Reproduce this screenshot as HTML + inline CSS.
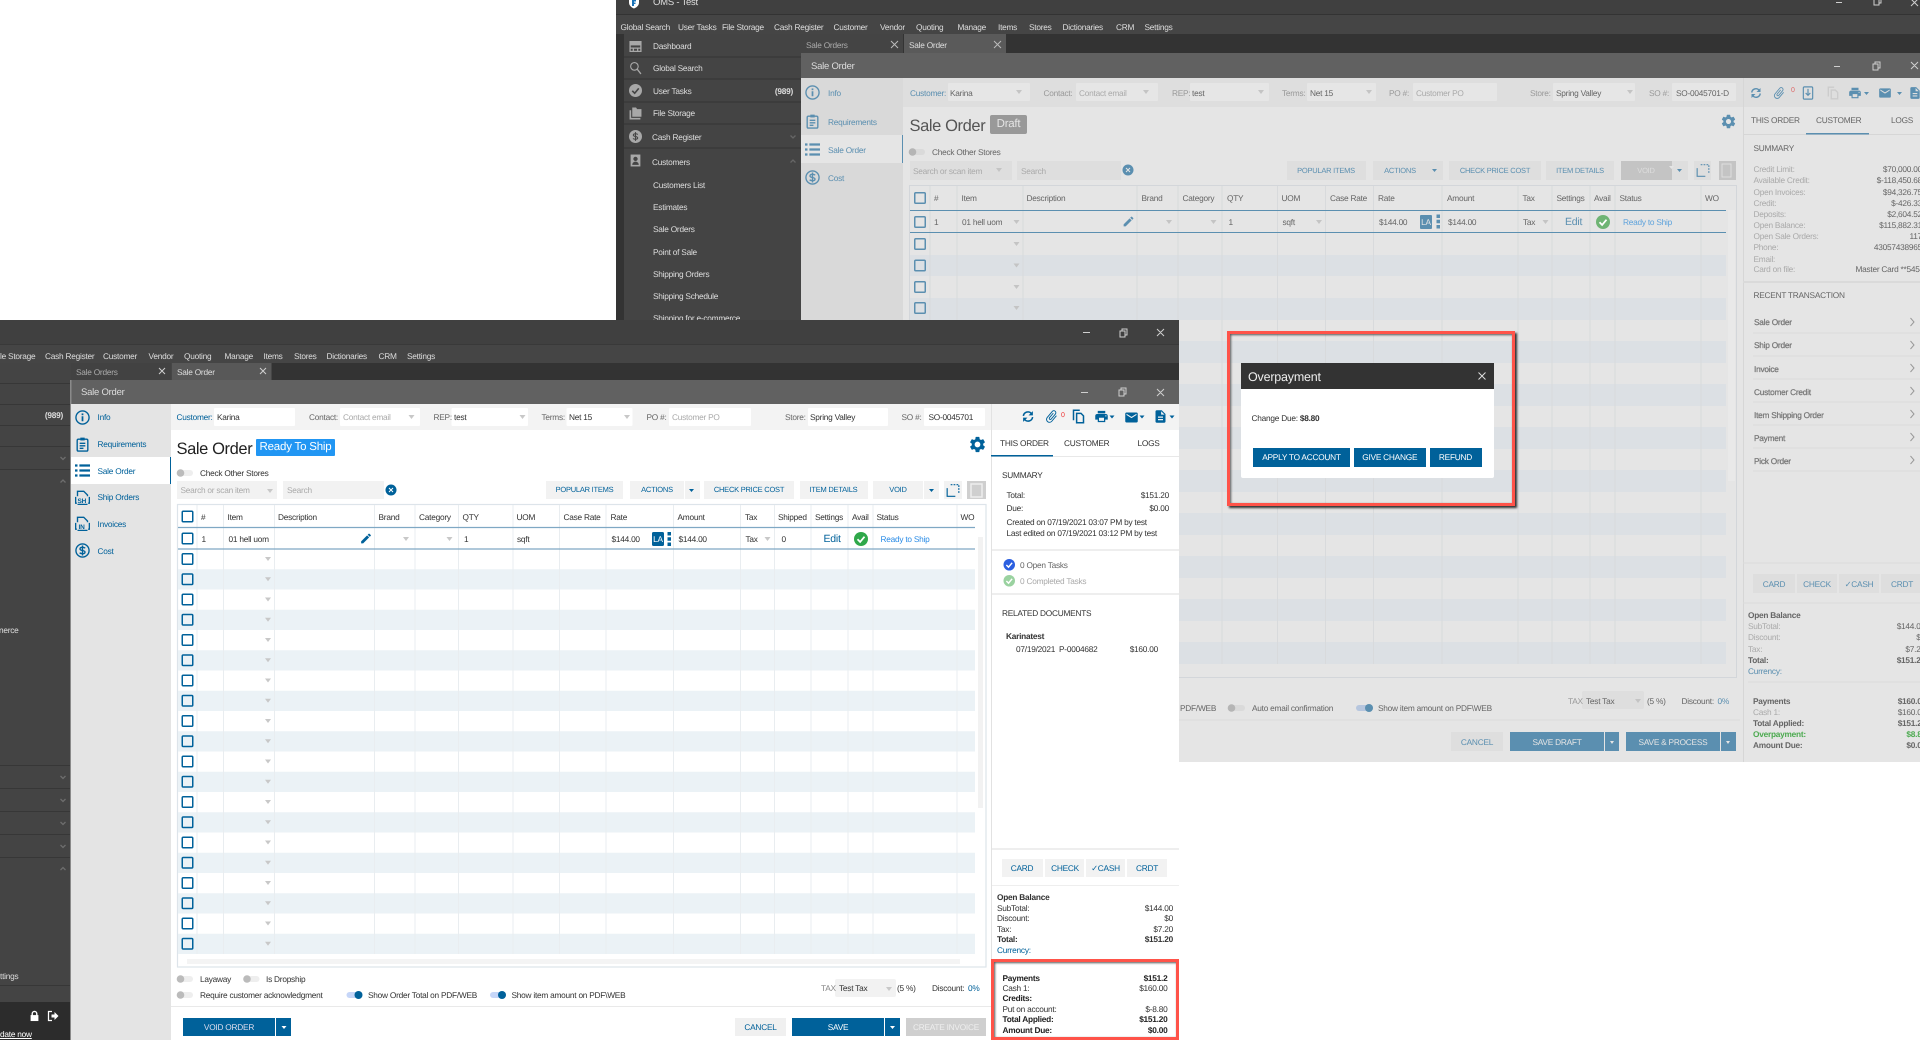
<!DOCTYPE html>
<html><head><meta charset="utf-8"><title>Sale Order</title>
<style>
html,body{margin:0;padding:0;background:#fff;width:1920px;height:1040px;overflow:hidden}
#w{position:absolute;left:0;top:0;width:1920px;height:1040px;overflow:hidden;filter:blur(.35px);font-family:"Liberation Sans",sans-serif;font-size:8.300px;letter-spacing:-.24px;text-rendering:geometricPrecision}
svg.p{position:absolute;left:0;top:0}
.t{position:absolute;line-height:0;white-space:nowrap}
.t:not(.box){margin-top:.2px}
.r{transform:translateX(-100%)}
.c{transform:translateX(-50%)}
.b{font-weight:bold}
.s{-webkit-text-stroke:.25px currentColor;color:#777}
.u{color:#666}.lo{color:#333}
.du{color:#ddd}.g{color:#aaa}
.bu{color:#5b8fb0}.bl{color:#00619a}
.box{position:absolute;box-sizing:border-box}
</style></head><body><div id="w">
<svg class="p" width="1920" height="1040" viewBox="0 0 1920 1040" xmlns="http://www.w3.org/2000/svg">
<defs>
<symbol id="gear" viewBox="0 0 24 24"><path fill="currentColor" d="M19.14 12.94c.04-.3.06-.61.06-.94 0-.32-.02-.64-.07-.94l2.03-1.58c.18-.14.23-.41.12-.61l-1.92-3.32c-.12-.22-.37-.29-.59-.22l-2.39.96c-.5-.38-1.03-.7-1.62-.94l-.36-2.54c-.04-.24-.24-.41-.48-.41h-3.84c-.24 0-.43.17-.47.41l-.36 2.54c-.59.24-1.13.57-1.62.94l-2.39-.96c-.22-.08-.47 0-.59.22L2.74 8.87c-.12.21-.08.47.12.61l2.03 1.58c-.05.3-.09.63-.09.94s.02.64.07.94l-2.03 1.58c-.18.14-.23.41-.12.61l1.92 3.32c.12.22.37.29.59.22l2.39-.96c.5.38 1.03.7 1.62.94l.36 2.54c.05.24.24.41.48.41h3.84c.24 0 .44-.17.47-.41l.36-2.54c.59-.24 1.13-.56 1.62-.94l2.39.96c.22.08.47 0 .59-.22l1.92-3.32c.12-.22.07-.47-.12-.61l-2.01-1.58zM12 15.6c-1.98 0-3.6-1.62-3.6-3.6s1.62-3.6 3.6-3.6 3.6 1.62 3.6 3.6-1.62 3.6-3.6 3.6z"/></symbol>
<symbol id="pen" viewBox="0 0 24 24"><path fill="currentColor" d="M3 17.25V21h3.75L17.81 9.94l-3.75-3.75L3 17.25zM20.71 7.04a1 1 0 0 0 0-1.41l-2.34-2.34a1 1 0 0 0-1.41 0l-1.83 1.83 3.75 3.75 1.83-1.83z"/></symbol>
<symbol id="print" viewBox="0 0 24 24"><path fill="currentColor" d="M19 8H5c-1.66 0-3 1.34-3 3v6h4v4h12v-4h4v-6c0-1.66-1.34-3-3-3zm-3 11H8v-5h8v5zm3-7c-.55 0-1-.45-1-1s.45-1 1-1 1 .45 1 1-.45 1-1 1zm-1-9H6v4h12V3z"/></symbol>
<symbol id="mail" viewBox="0 0 24 24"><path fill="currentColor" d="M20 4H4c-1.1 0-2 .9-2 2v12c0 1.1.9 2 2 2h16c1.1 0 2-.9 2-2V6c0-1.1-.9-2-2-2zm0 4l-8 5-8-5V6l8 5 8-5v2z"/></symbol>
<symbol id="doc" viewBox="0 0 24 24"><path fill="currentColor" d="M14 2H6c-1.1 0-2 .9-2 2v16c0 1.1.9 2 2 2h12c1.1 0 2-.9 2-2V8l-6-6zm2 16H8v-2h8v2zm0-4H8v-2h8v2zm-3-5V3.5L18.5 9H13z"/></symbol>
<symbol id="clip" viewBox="0 0 24 24"><path fill="currentColor" transform="rotate(40 12 12)" d="M16.5 6v11.5c0 2.21-1.79 4-4 4s-4-1.79-4-4V5c0-1.38 1.12-2.5 2.5-2.5s2.5 1.12 2.5 2.5v10.5c0 .55-.45 1-1 1s-1-.45-1-1V6H10v9.5c0 1.38 1.12 2.5 2.5 2.5s2.5-1.12 2.5-2.5V5c0-2.21-1.79-4-4-4S7 2.79 7 5v12.5c0 3.04 2.46 5.5 5.5 5.5s5.5-2.46 5.5-5.5V6h-1.5z"/></symbol>
<symbol id="ref" viewBox="0 0 24 24"><path fill="none" stroke="currentColor" stroke-width="2.800" d="M3.500 11a8.500 8.500 0 0 1 14.500-5M20.500 13a8.500 8.500 0 0 1-14.500 5"/><path fill="currentColor" d="M21 2v8h-8zM3 22v-8h8z"/></symbol>
<symbol id="copy" viewBox="0 0 24 24"><path fill="none" stroke="currentColor" stroke-width="2.400" d="M4 18V2h10M9 7h7l4 4v11H9z"/></symbol>
<symbol id="saved" viewBox="0 0 24 24"><rect x="4" y="1.500" width="16" height="21" rx="2" fill="none" stroke="currentColor" stroke-width="2"/><path fill="none" stroke="currentColor" stroke-width="2" d="M12 5v11M8 12l4 4 4-4"/></symbol>
<symbol id="info" viewBox="0 0 24 24"><circle cx="12" cy="12" r="10.500" fill="none" stroke="currentColor" stroke-width="2.200"/><rect x="10.600" y="10" width="2.800" height="8" fill="currentColor"/><rect x="10.600" y="5.500" width="2.800" height="2.800" fill="currentColor"/></symbol>
<symbol id="req" viewBox="0 0 24 24"><rect x="3.500" y="3.500" width="17" height="19" rx="2" fill="none" stroke="currentColor" stroke-width="2.200"/><rect x="8.500" y="1" width="7" height="4.500" fill="currentColor"/><path stroke="currentColor" stroke-width="2.200" d="M7.500 10h9M7.500 14h9M7.500 18h6"/></symbol>
<symbol id="list" viewBox="0 0 24 24"><path stroke="currentColor" stroke-width="3.600" d="M7 4h17M7 12h17M7 20h17M0 4h4M0 12h4M0 20h4"/></symbol>
<symbol id="cost" viewBox="0 0 24 24"><circle cx="12" cy="12" r="10.500" fill="none" stroke="currentColor" stroke-width="2.200"/><path fill="none" stroke="currentColor" stroke-width="2.200" d="M16 8.500c-1-2-8-2.500-8 1 0 3.500 8 1.500 8 5 0 3.500-7 3-8.500 1M12 4v16"/></symbol>
<symbol id="fdoc" viewBox="0 0 24 24"><path fill="none" stroke="currentColor" stroke-width="2.200" d="M4 10V2h10l6 6v2M1 11v10h2M23 11v10h-2"/><path stroke="currentColor" stroke-width="2" d="M4 23h16"/></symbol>
<symbol id="dash" viewBox="0 0 24 24"><path fill="currentColor" d="M1 2h22v8H1z"/><path fill="none" stroke="currentColor" stroke-width="2.400" d="M2 3h20v18H2zM2 15h20M8 15v6M16 15v6"/></symbol>
<symbol id="srch" viewBox="0 0 24 24"><circle cx="10" cy="9" r="7" fill="none" stroke="currentColor" stroke-width="2"/><path stroke="currentColor" stroke-width="2.400" d="M15 14l7 9"/></symbol>
<symbol id="chk" viewBox="0 0 24 24"><circle cx="12" cy="12" r="12" fill="currentColor"/><path fill="none" stroke="#fff" stroke-width="3" d="M6 12.500l4.500 4.500L18 8"/></symbol>
<symbol id="chk2" viewBox="0 0 24 24"><circle cx="12" cy="12" r="12" fill="currentColor"/><path fill="none" stroke="#444" stroke-width="3" d="M6 12.500l4.500 4.500L18 8"/></symbol>
<symbol id="fold" viewBox="0 0 24 24"><path fill="currentColor" d="M1 6h3v14h17v3H1zM6 1h7l2 3h8v14H6z"/></symbol>
<symbol id="dol" viewBox="0 0 24 24"><circle cx="12" cy="12" r="12" fill="currentColor"/><path fill="none" stroke="#444" stroke-width="2" d="M16 8.500c-1-2-8-2.500-8 1 0 3.500 8 1.500 8 5 0 3.500-7 3-8.500 1M12 4v16"/></symbol>
<symbol id="pers" viewBox="0 0 24 24"><path fill="currentColor" d="M3 1h18v22H3z"/><circle cx="12" cy="9" r="4" fill="#444"/><path fill="#444" d="M6 20c0-8 12-8 12 0z"/></symbol>
<symbol id="dots" viewBox="0 0 4 16"><path fill="currentColor" d="M0 0h4v4H0zM0 6h4v4H0zM0 12h4v4H0z"/></symbol>
<symbol id="sel" viewBox="0 0 24 24"><path fill="none" stroke="currentColor" stroke-width="2" stroke-dasharray="3 2" d="M8 2h14v14"/><path fill="none" stroke="currentColor" stroke-width="2" d="M2 8v14h14"/></symbol>
<symbol id="lock" viewBox="0 0 24 24"><path fill="none" stroke="#fff" stroke-width="3" d="M7 11V7a5 5 0 0 1 10 0v4"/><rect x="3.500" y="10" width="17" height="13" fill="#fff"/></symbol>
<symbol id="out" viewBox="0 0 24 24"><path fill="none" stroke="#fff" stroke-width="2.500" d="M10 3H3v18h7"/><path fill="#fff" d="M9 9h6V4l8 8-8 8v-5H9z"/></symbol>
<symbol id="logo" viewBox="0 0 24 24"><path fill="#fff" d="M2 2h20v9c0 6-5 10-10 12C7 21 2 17 2 11z"/><path fill="#1b74b8" d="M8 5h8v4h-4v2h3v3h-3v4H8z"/></symbol>
<g id="cb"><rect x=".75" y=".75" width="10.500" height="10.500" rx="1" fill="none" stroke="#00619a" stroke-width="1.500"/></g>
<g id="cu"><rect x=".75" y=".75" width="10.500" height="10.500" rx="1" fill="none" stroke="#5b8fb0" stroke-width="1.500"/></g>
</defs>

<!-- UPPER WINDOW -->
<rect x="616" y="0" width="1304" height="14" fill="#404040"/>
<rect x="616" y="14" width="1304" height="20" fill="#454545"/><rect x="616" y="14" width="1304" height="1" fill="#333"/>
<rect x="616" y="34" width="1304" height="19" fill="#333"/>
<rect x="616" y="34" width="185" height="728" fill="#333"/>
<rect x="624" y="34" width="177" height="300" fill="#444"/>
<path stroke="#353535" d="M624 57h177M624 79h177M624 102h177M624 124h177M624 148h177"/>
<rect x="801" y="34" width="102" height="19" fill="#444"/><rect x="904" y="34" width="102" height="19" fill="#5a5a5a"/>
<rect x="801" y="53" width="1119" height="25" fill="#616161"/>
<rect x="801" y="78" width="102" height="684" fill="#d9d9d9"/>
<rect x="801" y="135" width="102" height="28" fill="#e5e5e5"/><rect x="902" y="135" width="1" height="28" fill="#5b8fb0"/>
<rect x="903" y="78" width="1017" height="684" fill="#e5e5e5"/>
<rect x="903" y="78" width="1017" height="29" fill="#dedede"/>
<rect x="1743" y="78" width="1" height="684" fill="#d6d6d6"/><rect x="1743" y="134" width="177" height="1" fill="#d6d6d6"/>
<rect x="1806" y="133" width="63" height="1.500" fill="#5b8fb0"/>
<rect x="1743" y="281" width="177" height="2" fill="#dadada"/>
<path stroke="#dcdcdc" d="M1753 333h167M1753 356h167M1753 379h167M1753 402h167M1753 425h167M1753 448h167M1753 471h167M1743 563h177M1743 603h177M1748 682h172"/>
<path fill="none" stroke="#999" d="M1910.500 318l3.500 4-3.500 4M1910.500 341l3.500 4-3.500 4M1910.500 364l3.500 4-3.500 4M1910.500 387l3.500 4-3.500 4M1910.500 410l3.500 4-3.500 4M1910.500 433l3.500 4-3.500 4M1910.500 456l3.500 4-3.500 4"/>
<!-- upper fields -->
<g fill="#e6e6e6"><rect x="948" y="83" width="82" height="18" rx="1"/><rect x="1076" y="83" width="82" height="18" rx="1"/><rect x="1190" y="83" width="79" height="18" rx="1"/><rect x="1307" y="83" width="69" height="18" rx="1"/><rect x="1413" y="83" width="84" height="18" rx="1"/><rect x="1553" y="83" width="82" height="18" rx="1"/><rect x="1672" y="83" width="64" height="18" rx="1"/></g>
<g fill="#dedede"><rect x="910" y="161" width="102" height="19"/><rect x="1017" y="161" width="104" height="19"/><rect x="1287" y="161" width="79" height="19"/><rect x="1373" y="161" width="70" height="19"/><rect x="1449" y="161" width="92" height="19"/><rect x="1546" y="161" width="68" height="19"/><rect x="1672" y="161" width="16" height="19"/><rect x="1694" y="161" width="17" height="19"/></g>
<rect x="1621" y="161" width="51" height="19" fill="#c4c4c4"/><rect x="1719" y="161" width="17" height="19" fill="#c4c4c4"/>
<rect x="1722" y="164" width="9" height="13" fill="none" stroke="#dedede"/>
<!-- upper table -->
<rect x="909.500" y="185.500" width="827" height="492" fill="none" stroke="#d3d6da"/>
<g fill="#dce0e4"><rect x="910" y="255" width="816" height="21"/><rect x="910" y="298" width="816" height="22"/><rect x="910" y="341" width="816" height="22"/><rect x="910" y="384" width="816" height="22"/><rect x="910" y="427" width="816" height="22"/><rect x="910" y="470" width="816" height="22"/><rect x="910" y="513" width="816" height="22"/><rect x="910" y="556" width="816" height="22"/><rect x="910" y="599" width="816" height="22"/><rect x="910" y="642" width="816" height="22"/></g>
<path stroke="#d8dadc" d="M930 186v478M957 186v478M1023 186v478M1137 186v478M1178 186v478M1222 186v478M1277.500 186v478M1325.500 186v478M1373.500 186v478M1442 186v478M1518 186v478M1552 186v478M1590 186v478M1615 186v478M1701 186v478"/>
<rect x="1728" y="210" width="7" height="271" fill="#e9e9e9"/>
<path stroke="#5b8fb0" d="M910 210.500h816M910 232.500h816"/>
<use href="#cu" x="914" y="192"/><use href="#cu" x="914" y="216"/><use href="#cu" x="914" y="238"/><use href="#cu" x="914" y="259.500"/><use href="#cu" x="914" y="281"/><use href="#cu" x="914" y="302"/>
<path fill="#c4c4c4" d="M1013.500 220h6l-3 4zM1166 220h6l-3 4zM1210.500 220h6l-3 4zM1316 220h6l-3 4zM1542.500 220h6l-3 4zM1013.500 242h6l-3 4zM1013.500 263.500h6l-3 4zM1013.500 285h6l-3 4zM1013.500 306h6l-3 4zM1016 90h6l-3 4zM1143 90h6l-3 4zM1258 90h6l-3 4zM1366 90h6l-3 4zM1627 90h6l-3 4zM996 168h6l-3 4z"/>
<rect x="1420" y="215" width="12" height="14" rx="1" fill="#5b8fb0"/><use href="#dots" x="1436.500" y="214" width="3.500" height="15" color="#5b8fb0"/>
<use href="#pen" x="1122" y="215" width="13" height="13" color="#5b8fb0"/>
<use href="#chk" x="1596" y="215" width="14" height="14" color="#6fb474"/>
<circle cx="1128" cy="170" r="5.500" fill="#5b8fb0"/><path stroke="#e5e5e5" d="M1126 168l4 4M1130 168l-4 4"/>
<use href="#gear" x="1720" y="113" width="17" height="17" color="#5b8fb0"/>
<!-- upper toolbar icons -->
<g color="#5b8fb0"><use href="#ref" x="1750" y="87" width="12" height="12"/><use href="#clip" x="1772" y="86" width="14" height="14"/><use href="#saved" x="1801" y="86" width="14" height="14"/><use href="#print" x="1848" y="86" width="14" height="14"/><path fill="#5b8fb0" d="M1864 92h5l-2.500 3zM1897 92h5l-2.500 3z"/><use href="#mail" x="1878" y="86" width="14" height="14"/><use href="#doc" x="1908" y="86" width="14" height="14"/></g>
<use href="#copy" x="1826" y="86" width="14" height="14" color="#ccc"/>
<g color="#5b8fb0"><use href="#info" x="805" y="85" width="15" height="15"/><use href="#req" x="805" y="114" width="15" height="15"/><use href="#list" x="805" y="142" width="15" height="15"/><use href="#cost" x="805" y="170" width="15" height="15"/></g>
<g color="#a8a8a8"><use href="#dash" x="629" y="40" width="13" height="13"/><use href="#srch" x="629" y="61" width="13" height="14"/><use href="#chk2" x="629" y="84" width="13" height="13"/><use href="#fold" x="629" y="107" width="13" height="13"/><use href="#dol" x="629" y="130" width="13" height="13"/><use href="#pers" x="629" y="154" width="13" height="13"/></g>
<path fill="none" stroke="#666" stroke-width="1.300" d="M790.500 135.500l2.500 2.500 2.500-2.500M790.500 162.500l2.500-2.500 2.500 2.500"/>
<use href="#logo" x="628" y="-3" width="12" height="12"/>
<!-- window controls upper -->
<g fill="none" stroke="#cfcfcf"><path d="M1836 2.500h6M1874 0v5h5V0M1876 0v-1h5v4h-2M1911 -1l7 7M1918 -1l-7 7"/><path d="M1834 66.500h6M1873 64h5v6h-5zM1875 64v-2h5v6h-2M1911 62l7 7M1918 62l-7 7"/><path d="M891 41l7 7M898 41l-7 7M994 41l7 7M1001 41l-7 7" stroke="#bbb"/></g>
<!-- toggles upper -->
<rect x="909" y="149" width="16" height="6" rx="3" fill="#dadada"/><circle cx="912.500" cy="152" r="3.800" fill="#b5b5b5"/>
<rect x="1228" y="705" width="17" height="6" rx="3" fill="#dadada"/><circle cx="1231.500" cy="708" r="3.800" fill="#b5b5b5"/>
<rect x="1356" y="705" width="17" height="6" rx="3" fill="#b6c6de"/><circle cx="1369" cy="708" r="4" fill="#5b8fb0"/>
<rect x="903" y="719.500" width="837" height="1" fill="#dcdcdc"/>
<!-- upper bottom -->
<rect x="1582" y="691" width="62" height="18" rx="2" fill="#dedede"/><path fill="#c4c4c4" d="M1635 699h6l-3 4z"/>
<rect x="1451" y="732" width="52" height="19" fill="#dedede"/>
<g fill="#5b8fb0"><rect x="1510" y="732" width="94" height="19"/><rect x="1605" y="732" width="14" height="19"/><rect x="1626" y="732" width="94" height="19"/><rect x="1721" y="732" width="15" height="19"/></g>
<path fill="#e5e5e5" d="M1610 741h4l-2 3zM1726 741h4l-2 3zM1669 166h5l-2.500 3z"/><path fill="#5b8fb0" d="M1432 169h5l-2.500 3zM1677 169h5l-2.500 3z"/>
<use href="#sel" x="1696" y="163" width="14" height="15" color="#5b8fb0"/>
<g fill="#dedede"><rect x="1753" y="574" width="42" height="19"/><rect x="1797" y="574" width="40" height="19"/><rect x="1839" y="574" width="40" height="19"/><rect x="1881" y="574" width="39" height="19"/></g>
</svg>

<div class="du">
<span class="t" style="left:653px;top:3px;font-size:9.500px">OMS - Test</span>
<span class="t" style="left:620.500px;top:27px">Global Search</span><span class="t" style="left:678px;top:27px">User Tasks</span><span class="t" style="left:722px;top:27px">File Storage</span><span class="t" style="left:774px;top:27px">Cash Register</span><span class="t" style="left:833.500px;top:27px">Customer</span><span class="t" style="left:880px;top:27px">Vendor</span><span class="t" style="left:916px;top:27px">Quoting</span><span class="t" style="left:957.500px;top:27px">Manage</span><span class="t" style="left:998px;top:27px">Items</span><span class="t" style="left:1029px;top:27px">Stores</span><span class="t" style="left:1062.500px;top:27px">Dictionaries</span><span class="t" style="left:1116px;top:27px">CRM</span><span class="t" style="left:1144.500px;top:27px">Settings</span>
<span class="t" style="left:653px;top:46px">Dashboard</span><span class="t" style="left:653px;top:68px">Global Search</span><span class="t" style="left:653px;top:91px">User Tasks</span><span class="t r b" style="left:793px;top:91px">(989)</span><span class="t" style="left:653px;top:113px">File Storage</span><span class="t" style="left:652px;top:137px">Cash Register</span><span class="t" style="left:652px;top:162px">Customers</span><span class="t" style="left:653px;top:185px">Customers List</span><span class="t" style="left:653px;top:207px">Estimates</span><span class="t" style="left:653px;top:229px">Sale Orders</span><span class="t" style="left:653px;top:252px">Point of Sale</span><span class="t" style="left:653px;top:274px">Shipping Orders</span><span class="t" style="left:653px;top:296px">Shipping Schedule</span><span class="t" style="left:653px;top:318px">Shipping for e-commerce</span>
<span class="t" style="left:806px;top:45px;color:#aaa">Sale Orders</span><span class="t" style="left:909px;top:45px">Sale Order</span>
<span class="t" style="left:811px;top:67px;font-size:9.500px">Sale Order</span>
</div>
<div class="u">
<span class="t bu" style="left:828px;top:93px">Info</span><span class="t bu" style="left:828px;top:122px">Requirements</span><span class="t bu" style="left:828px;top:150px">Sale Order</span><span class="t bu" style="left:828px;top:178px">Cost</span>
<span class="t bu" style="left:910px;top:93px">Customer:</span><span class="t" style="left:950px;top:93px">Karina</span><span class="t" style="left:1043.500px;top:93px;color:#999">Contact:</span><span class="t g" style="left:1079px;top:93px">Contact email</span><span class="t" style="left:1172px;top:93px;color:#999">REP:</span><span class="t" style="left:1192px;top:93px">test</span><span class="t" style="left:1282px;top:93px;color:#999">Terms:</span><span class="t" style="left:1310px;top:93px">Net 15</span><span class="t" style="left:1389px;top:93px;color:#999">PO #:</span><span class="t g" style="left:1416px;top:93px">Customer PO</span><span class="t" style="left:1530px;top:93px;color:#999">Store:</span><span class="t" style="left:1556px;top:93px">Spring Valley</span><span class="t" style="left:1649px;top:93px;color:#999">SO #:</span><span class="t" style="left:1676px;top:93px">SO-0045701-D</span>
<span class="t" style="left:1791px;top:91px;color:#d66;font-size:7px">0</span>
<span class="t" style="left:909.500px;top:126px;font-size:16.500px;letter-spacing:-.4px;color:#555">Sale Order</span>
<span class="box t" style="left:990px;top:115px;width:37px;height:19px;background:#999;border-radius:2px;color:#e5e5e5;font-size:11.500px;line-height:19px;text-align:center">Draft</span>
<span class="t" style="left:932px;top:152px">Check Other Stores</span>
<span class="t g" style="left:913px;top:171px">Search or scan item</span><span class="t g" style="left:1021px;top:171px">Search</span>
<span class="t bu c" style="left:1326px;top:171px;font-size:7.500px">POPULAR ITEMS</span><span class="t bu c" style="left:1400px;top:171px;font-size:7.500px">ACTIONS</span><span class="t bu c" style="left:1495px;top:171px;font-size:7.500px">CHECK PRICE COST</span><span class="t bu c" style="left:1580px;top:171px;font-size:7.500px">ITEM DETAILS</span><span class="t c" style="left:1646px;top:171px;font-size:7.500px;color:#dedede">VOID</span>
<span class="t" style="left:934px;top:198px">#</span><span class="t" style="left:961.500px;top:198px">Item</span><span class="t" style="left:1026.500px;top:198px">Description</span><span class="t" style="left:1141.500px;top:198px">Brand</span><span class="t" style="left:1182.500px;top:198px">Category</span><span class="t" style="left:1227px;top:198px">QTY</span><span class="t" style="left:1281.500px;top:198px">UOM</span><span class="t" style="left:1330px;top:198px">Case Rate</span><span class="t" style="left:1378px;top:198px">Rate</span><span class="t" style="left:1447px;top:198px">Amount</span><span class="t" style="left:1522.500px;top:198px">Tax</span><span class="t" style="left:1556.500px;top:198px">Settings</span><span class="t" style="left:1594px;top:198px">Avail</span><span class="t" style="left:1619.500px;top:198px">Status</span><span class="t" style="left:1705px;top:198px">WO</span>
<span class="t" style="left:934px;top:222px">1</span><span class="t" style="left:962px;top:222px">01 hell uom</span><span class="t" style="left:1228.500px;top:222px">1</span><span class="t" style="left:1282.500px;top:222px">sqft</span><span class="t" style="left:1379px;top:222px">$144.00</span><span class="t c" style="left:1426px;top:222px;color:#e5e5e5">LA</span><span class="t" style="left:1448px;top:222px">$144.00</span><span class="t" style="left:1523px;top:222px">Tax</span><span class="t bu" style="left:1565px;top:222px;font-size:10.500px">Edit</span><span class="t" style="left:1623px;top:222px;color:#5fa3dc">Ready to Ship</span>
<span class="t" style="left:1751px;top:120px">THIS ORDER</span><span class="t" style="left:1816px;top:120px">CUSTOMER</span><span class="t" style="left:1891px;top:120px">LOGS</span>
<span class="t" style="left:1753.500px;top:148px">SUMMARY</span>
<span class="t g" style="left:1753.500px;top:169px">Credit Limit:</span><span class="t r" style="left:1922px;top:169px">$70,000.00</span>
<span class="t g" style="left:1753.500px;top:180px">Available Credit:</span><span class="t r" style="left:1922px;top:180px">$-118,450.68</span>
<span class="t g" style="left:1753.500px;top:191.500px">Open Invoices:</span><span class="t r" style="left:1922px;top:191.500px">$94,326.75</span>
<span class="t g" style="left:1753.500px;top:202.500px">Credit:</span><span class="t r" style="left:1922px;top:202.500px">$-426.33</span>
<span class="t g" style="left:1753.500px;top:214px">Deposits:</span><span class="t r" style="left:1922px;top:214px">$2,604.52</span>
<span class="t g" style="left:1753.500px;top:225px">Open Balance:</span><span class="t r" style="left:1922px;top:225px">$115,882.31</span>
<span class="t g" style="left:1753.500px;top:236px">Open Sale Orders:</span><span class="t r" style="left:1922px;top:236px">117</span>
<span class="t g" style="left:1753.500px;top:247px">Phone:</span><span class="t r" style="left:1922px;top:247px">43057438965</span>
<span class="t g" style="left:1753.500px;top:258.500px">Email:</span>
<span class="t g" style="left:1753.500px;top:269px">Card on file:</span><span class="t r" style="left:1924px;top:269px">Master Card **5454</span>
<span class="t" style="left:1753.500px;top:295px">RECENT TRANSACTION</span>
<span class="t s" style="left:1754px;top:322px">Sale Order</span><span class="t s" style="left:1754px;top:345px">Ship Order</span><span class="t s" style="left:1754px;top:368.500px">Invoice</span><span class="t s" style="left:1754px;top:391.500px">Customer Credit</span><span class="t s" style="left:1754px;top:414.500px">Item Shipping Order</span><span class="t s" style="left:1754px;top:437.500px">Payment</span><span class="t s" style="left:1754px;top:460.500px">Pick Order</span>
<span class="t bu c" style="left:1774px;top:584px">CARD</span><span class="t bu c" style="left:1817px;top:584px">CHECK</span><span class="t bu c" style="left:1859px;top:584px">✓CASH</span><span class="t bu c" style="left:1902px;top:584px">CRDT</span>
<span class="t b" style="left:1748px;top:615px">Open Balance</span><span class="t g" style="left:1748px;top:626px">SubTotal:</span><span class="t r" style="left:1925px;top:626px">$144.00</span><span class="t g" style="left:1748px;top:637px">Discount:</span><span class="t r" style="left:1925px;top:637px">$0</span><span class="t g" style="left:1748px;top:648.500px">Tax:</span><span class="t r" style="left:1925px;top:648.500px">$7.20</span><span class="t b" style="left:1748px;top:659.500px">Total:</span><span class="t b r" style="left:1925px;top:659.500px">$151.20</span><span class="t bu" style="left:1748px;top:671px">Currency:</span>
<span class="t b" style="left:1753px;top:701px">Payments</span><span class="t b r" style="left:1926px;top:701px">$160.00</span><span class="t g" style="left:1753px;top:711.500px">Cash 1:</span><span class="t r" style="left:1926px;top:711.500px">$160.00</span><span class="t b" style="left:1753px;top:722.500px">Total Applied:</span><span class="t b r" style="left:1926px;top:722.500px">$151.20</span><span class="t b" style="left:1753px;top:734px;color:#4caa50">Overpayment:</span><span class="t b r" style="left:1926px;top:734px;color:#4caa50">$8.80</span><span class="t b" style="left:1753px;top:745px">Amount Due:</span><span class="t b r" style="left:1926px;top:745px">$0.00</span>
<span class="t" style="left:1180px;top:708px">PDF/WEB</span><span class="t" style="left:1252px;top:708px">Auto email confirmation</span><span class="t" style="left:1378px;top:708px">Show item amount on PDF\WEB</span>
<span class="t" style="left:1568px;top:701px;color:#999">TAX</span><span class="t" style="left:1586px;top:701px">Test Tax</span><span class="t" style="left:1647px;top:701px">(5 %)</span><span class="t" style="left:1681.500px;top:701px">Discount:</span><span class="t bu" style="left:1717.500px;top:701px">0%</span>
<span class="t bu c" style="left:1477px;top:742px">CANCEL</span><span class="t c" style="left:1557px;top:742px;color:#e5e5e5">SAVE DRAFT</span><span class="t c" style="left:1673px;top:742px;color:#e5e5e5">SAVE &amp; PROCESS</span>
</div>

<!-- LOWER WINDOW -->
<svg class="p" width="1920" height="1040" viewBox="0 0 1920 1040" xmlns="http://www.w3.org/2000/svg">
<rect x="0" y="320" width="1179" height="24" fill="#404040"/>
<rect x="0" y="344" width="1179" height="19" fill="#454545"/><rect x="0" y="344" width="1179" height="1" fill="#393939"/>
<rect x="0" y="363" width="1179" height="17" fill="#333"/>
<rect x="0" y="380" width="1179" height="24" fill="#616161"/>
<rect x="0" y="363" width="71" height="677" fill="#444"/>
<path stroke="#373737" d="M0 383.500h71M0 404.500h71M0 425.500h71M0 446.500h71M0 469.500h71M0 765.500h70M0 788.500h70M0 811.500h70M0 834.500h70M0 857.500h70M0 985.500h70"/>
<rect x="70" y="380" width="1.500" height="660" fill="#8a8a8a"/>
<rect x="0" y="1002" width="70" height="38" fill="#2c2c2c"/>
<rect x="71" y="363" width="100" height="17" fill="#424242"/><rect x="171.500" y="363" width="100" height="17" fill="#585858"/>
<path fill="none" stroke="#6d6d6d" stroke-width="1.300" d="M60.500 457l2.500 2.500 2.500-2.500M60.500 482.500l2.500-2.500 2.500 2.500M60.500 776l2.500 2.500 2.500-2.500M60.500 799l2.500 2.500 2.500-2.500M60.500 822l2.500 2.500 2.500-2.500M60.500 845l2.500 2.500 2.500-2.500M60.500 870l2.500-2.500 2.500 2.500"/>
<rect x="71" y="404" width="100" height="636" fill="#e4e4e4"/>
<rect x="71" y="457" width="100" height="27" fill="#fff"/><rect x="170" y="457" width="1.200" height="27" fill="#00619a"/>
<rect x="171" y="404" width="1008" height="636" fill="#fff"/>
<rect x="171" y="404" width="1008" height="26" fill="#f3f3f3"/>
<rect x="991" y="404" width="1" height="636" fill="#e2e2e2"/>
<g fill="#fff"><rect x="214" y="408" width="81" height="18" rx="1"/><rect x="340" y="408" width="80" height="18" rx="1"/><rect x="451.500" y="408" width="76.500" height="18" rx="1"/><rect x="566.500" y="408" width="66" height="18" rx="1"/><rect x="669" y="408" width="82" height="18" rx="1"/><rect x="808" y="408" width="80" height="18" rx="1"/><rect x="924" y="408" width="61" height="18" rx="1"/></g>
<g fill="#f2f2f2"><rect x="177" y="481" width="100" height="18"/><rect x="283" y="481" width="101" height="18"/><rect x="546" y="481" width="77" height="18"/><rect x="630" y="481" width="70" height="18"/><rect x="704" y="481" width="90" height="18"/><rect x="800" y="481" width="68" height="18"/><rect x="873" y="481" width="66" height="18"/><rect x="944" y="481" width="18" height="18"/></g>
<rect x="967" y="481" width="19" height="18" fill="#cfcfcf"/><rect x="971" y="484" width="11" height="13" fill="none" stroke="#eee" stroke-width="1.500"/>
<path stroke="#fff" d="M684.500 481v18M923.500 481v18"/>
<path fill="#00619a" d="M689 489h5l-2.500 3zM929 489h5l-2.500 3z"/>
<use href="#sel" x="946" y="483" width="14" height="15" color="#00619a"/>
<circle cx="391" cy="490" r="5.500" fill="#00619a"/><path stroke="#fff" d="M389 488l4 4M393 488l-4 4"/>
<!-- lower table -->
<rect x="177.500" y="504.500" width="808.500" height="462.500" fill="none" stroke="#dde4ea" stroke-width="1.200"/>
<g fill="#ebf2f6"><rect x="178" y="569.250" width="797" height="20.250"/><rect x="178" y="609.750" width="797" height="20.250"/><rect x="178" y="650.250" width="797" height="20.250"/><rect x="178" y="690.750" width="797" height="20.250"/><rect x="178" y="731.250" width="797" height="20.250"/><rect x="178" y="771.750" width="797" height="20.250"/><rect x="178" y="812.250" width="797" height="20.250"/><rect x="178" y="852.750" width="797" height="20.250"/><rect x="178" y="893.250" width="797" height="20.250"/><rect x="178" y="933.750" width="797" height="20.250"/></g>
<path stroke="#e9edf0" d="M197 505v449M223.500 505v449M274.500 505v449M374.500 505v449M415 505v449M458.500 505v449M513 505v449M559.500 505v449M606 505v449M673.500 505v449M740.500 505v449M774.500 505v449M811 505v449M848 505v449M873 505v449M957 505v449"/>
<rect x="187" y="959" width="773" height="5" fill="#f4f4f4"/><rect x="978" y="537" width="5" height="271" fill="#f2f2f2"/>
<path stroke="#7fa8c4" stroke-width="1.200" d="M178 527.500h797M178 549h797"/>
<use href="#cb" x="181.500" y="510.500"/><use href="#cb" x="181.500" y="532.500"/>
<use href="#cb" x="181.500" y="553"/><use href="#cb" x="181.500" y="573.250"/><use href="#cb" x="181.500" y="593.500"/><use href="#cb" x="181.500" y="613.750"/><use href="#cb" x="181.500" y="634"/><use href="#cb" x="181.500" y="654.250"/><use href="#cb" x="181.500" y="674.500"/><use href="#cb" x="181.500" y="694.750"/><use href="#cb" x="181.500" y="715"/><use href="#cb" x="181.500" y="735.250"/><use href="#cb" x="181.500" y="755.500"/><use href="#cb" x="181.500" y="775.750"/><use href="#cb" x="181.500" y="796"/><use href="#cb" x="181.500" y="816.250"/><use href="#cb" x="181.500" y="836.500"/><use href="#cb" x="181.500" y="856.750"/><use href="#cb" x="181.500" y="877"/><use href="#cb" x="181.500" y="897.250"/><use href="#cb" x="181.500" y="917.500"/><use href="#cb" x="181.500" y="937.750"/>
<path fill="#c8c8c8" d="M265 557h6l-3 4zM265 577.250h6l-3 4zM265 597.500h6l-3 4zM265 617.750h6l-3 4zM265 638h6l-3 4zM265 658.250h6l-3 4zM265 678.500h6l-3 4zM265 698.750h6l-3 4zM265 719h6l-3 4zM265 739.250h6l-3 4zM265 759.500h6l-3 4zM265 779.750h6l-3 4zM265 800h6l-3 4zM265 820.250h6l-3 4zM265 840.500h6l-3 4zM265 860.750h6l-3 4zM265 881h6l-3 4zM265 901.250h6l-3 4zM265 921.500h6l-3 4zM265 941.750h6l-3 4zM403 537h6l-3 4zM446.500 537h6l-3 4zM764.500 537h6l-3 4zM408.500 415h6l-3 4zM519.500 415h6l-3 4zM624 415h6l-3 4zM267 489h6l-3 4z"/>
<use href="#pen" x="359.500" y="532" width="13" height="13" color="#00619a"/>
<rect x="652" y="532" width="12" height="14" rx="1.500" fill="#00619a"/><use href="#dots" x="667.500" y="531.500" width="3.500" height="15" color="#00619a"/>
<use href="#chk" x="854" y="532" width="14" height="14" color="#2fa84a"/>
<use href="#gear" x="968" y="435" width="19" height="19" color="#00619a"/>
<g color="#00619a"><use href="#ref" x="1021.500" y="410" width="13" height="13"/><use href="#clip" x="1044" y="409" width="15" height="15"/><use href="#copy" x="1071" y="409" width="15" height="15"/><use href="#print" x="1094" y="409" width="15" height="15"/><path fill="#00619a" d="M1109.500 415.500h5l-2.500 3zM1139.500 415.500h5l-2.500 3zM1169.500 415.500h5l-2.500 3z"/><use href="#mail" x="1124" y="410" width="15" height="15"/><use href="#doc" x="1153" y="409" width="15" height="15"/></g>
<g color="#00619a"><use href="#info" x="75" y="410" width="15" height="15"/><use href="#req" x="75" y="437" width="15" height="15"/><use href="#list" x="75" y="463" width="15" height="15"/><use href="#fdoc" x="75" y="490" width="15" height="15"/><use href="#fdoc" x="75" y="516" width="15" height="15"/><use href="#cost" x="75" y="543" width="15" height="15"/></g>
<text x="77.500" y="503" font-family="Liberation Sans" font-size="6.500" font-weight="bold" fill="#00619a">SH</text><text x="78.500" y="529" font-family="Liberation Sans" font-size="6.500" font-weight="bold" fill="#00619a">IN</text>
<rect x="992" y="456" width="187" height="1" fill="#e8e8e8"/><rect x="991" y="455" width="62" height="1.500" fill="#00619a"/>
<rect x="992" y="549" width="187" height="2" fill="#eee"/><rect x="992" y="593" width="187" height="2" fill="#eee"/><rect x="992" y="848" width="187" height="2" fill="#eee"/><rect x="992" y="885" width="187" height="1" fill="#eee"/>
<use href="#chk" x="1003.500" y="559" width="11.500" height="11.500" color="#2b5fe0"/><use href="#chk" x="1003.500" y="575" width="11.500" height="11.500" color="#9ad2a0"/>
<g fill="#f2f2f2"><rect x="1002" y="859" width="41" height="18"/><rect x="1045" y="859" width="39" height="18"/><rect x="1086" y="859" width="39" height="18"/><rect x="1127" y="859" width="40" height="18"/></g>
<!-- toggles lower -->
<g fill="#eee"><rect x="177" y="470" width="16" height="6" rx="3"/><rect x="177" y="976" width="16" height="6" rx="3"/><rect x="243.500" y="976" width="16" height="6" rx="3"/><rect x="177" y="992" width="16" height="6" rx="3"/></g>
<g fill="#bbb"><circle cx="180.500" cy="473" r="3.800"/><circle cx="180.500" cy="979" r="3.800"/><circle cx="247" cy="979" r="3.800"/><circle cx="180.500" cy="995" r="3.800"/></g>
<g fill="#c6d6f8"><rect x="346.500" y="992" width="16" height="6" rx="3"/><rect x="490" y="992" width="16" height="6" rx="3"/></g>
<g fill="#00619a"><circle cx="358.500" cy="995" r="4"/><circle cx="502" cy="995" r="4"/></g>
<rect x="171" y="1006" width="820" height="1" fill="#e9e9e9"/>
<rect x="835" y="979" width="61" height="18" rx="2" fill="#f2f2f2"/><path fill="#c8c8c8" d="M886 987h6l-3 4z"/>
<g fill="#00619a"><rect x="183" y="1018" width="92" height="18"/><rect x="276" y="1018" width="15" height="18"/><rect x="792" y="1018" width="92" height="18"/><rect x="885" y="1018" width="15" height="18"/></g>
<path fill="#fff" d="M281.500 1026h5l-2.500 3zM890 1026h5l-2.500 3z"/>
<rect x="735" y="1018" width="51" height="18" fill="#f0f0f0"/><rect x="906" y="1018" width="80" height="18" fill="#cfcfcf"/>
<!-- window controls lower -->
<g fill="none" stroke="#cfcfcf"><path d="M1083 332.500h7M1120 331h5v6h-5zM1122 331v-2h5v6h-2M1157 329l7 7M1164 329l-7 7"/><path d="M1081 392.500h7M1119 390h5v6h-5zM1121 390v-2h5v6h-2M1157 389l7 7M1164 389l-7 7"/><path d="M159 368l6 6M165 368l-6 6M260 368l6 6M266 368l-6 6"/></g>
<use href="#lock" x="29" y="1010" width="11" height="12"/><use href="#out" x="47" y="1010" width="12" height="12"/>
</svg>
<div class="lo">
<div class="du">
<span class="t" style="left:0;top:356px">le Storage</span><span class="t" style="left:45px;top:356px">Cash Register</span><span class="t" style="left:103px;top:356px">Customer</span><span class="t" style="left:148.500px;top:356px">Vendor</span><span class="t" style="left:184px;top:356px">Quoting</span><span class="t" style="left:224.500px;top:356px">Manage</span><span class="t" style="left:263.500px;top:356px">Items</span><span class="t" style="left:294px;top:356px">Stores</span><span class="t" style="left:326.500px;top:356px">Dictionaries</span><span class="t" style="left:378.500px;top:356px">CRM</span><span class="t" style="left:407px;top:356px">Settings</span>
<span class="t" style="left:76px;top:372px;color:#aaa">Sale Orders</span><span class="t" style="left:177px;top:372px">Sale Order</span>
<span class="t" style="left:81px;top:393px;font-size:9.500px">Sale Order</span>
<span class="t r b" style="left:63px;top:415px">(989)</span>
<span class="t" style="left:-1px;top:630px">nerce</span><span class="t" style="left:0;top:976px">ttings</span>
<span class="t" style="left:0;top:1034px;color:#fff;text-decoration:underline">date now</span>
</div>
<span class="t bl" style="left:97.500px;top:417px">Info</span><span class="t bl" style="left:97.500px;top:444px">Requirements</span><span class="t bl" style="left:97.500px;top:471px">Sale Order</span><span class="t bl" style="left:97.500px;top:497px">Ship Orders</span><span class="t bl" style="left:97.500px;top:524px">Invoices</span><span class="t bl" style="left:97.500px;top:551px">Cost</span>
<span class="t bl" style="left:176.500px;top:417px">Customer:</span><span class="t" style="left:217px;top:417px">Karina</span><span class="t" style="left:309px;top:417px;color:#666">Contact:</span><span class="t g" style="left:343px;top:417px">Contact email</span><span class="t" style="left:433.500px;top:417px;color:#666">REP:</span><span class="t" style="left:454px;top:417px">test</span><span class="t" style="left:541.500px;top:417px;color:#666">Terms:</span><span class="t" style="left:569px;top:417px">Net 15</span><span class="t" style="left:646.500px;top:417px;color:#666">PO #:</span><span class="t g" style="left:672px;top:417px">Customer PO</span><span class="t" style="left:785px;top:417px;color:#666">Store:</span><span class="t" style="left:810px;top:417px">Spring Valley</span><span class="t" style="left:901.500px;top:417px;color:#666">SO #:</span><span class="t" style="left:928.500px;top:417px">SO-0045701</span>
<span class="t" style="left:1061px;top:416px;color:#e33;font-size:7px">0</span>
<span class="t" style="left:176.500px;top:449px;font-size:16.500px;letter-spacing:-.4px;color:#222">Sale Order</span>
<span class="box t" style="left:256px;top:439px;width:79px;height:17px;background:#2196f3;border-radius:1px;color:#fff;font-size:11.500px;line-height:17px;text-align:center;letter-spacing:-.2px">Ready To Ship</span>
<span class="t" style="left:200px;top:473px">Check Other Stores</span>
<span class="t g" style="left:180.500px;top:490px">Search or scan item</span><span class="t g" style="left:287px;top:490px">Search</span>
<span class="t bl c" style="left:584.500px;top:490px;font-size:7.500px">POPULAR ITEMS</span><span class="t bl c" style="left:657px;top:490px;font-size:7.500px">ACTIONS</span><span class="t bl c" style="left:749px;top:490px;font-size:7.500px">CHECK PRICE COST</span><span class="t bl c" style="left:833.500px;top:490px;font-size:7.500px">ITEM DETAILS</span><span class="t bl c" style="left:898px;top:490px;font-size:7.500px">VOID</span>
<span class="t" style="left:201px;top:516.500px">#</span><span class="t" style="left:227.500px;top:516.500px">Item</span><span class="t" style="left:278px;top:516.500px">Description</span><span class="t" style="left:378.500px;top:516.500px">Brand</span><span class="t" style="left:419px;top:516.500px">Category</span><span class="t" style="left:462.500px;top:516.500px">QTY</span><span class="t" style="left:516.500px;top:516.500px">UOM</span><span class="t" style="left:563.500px;top:516.500px">Case Rate</span><span class="t" style="left:610.500px;top:516.500px">Rate</span><span class="t" style="left:677.500px;top:516.500px">Amount</span><span class="t" style="left:745px;top:516.500px">Tax</span><span class="t" style="left:778px;top:516.500px">Shipped</span><span class="t" style="left:815px;top:516.500px">Settings</span><span class="t" style="left:852px;top:516.500px">Avail</span><span class="t" style="left:876.500px;top:516.500px">Status</span><span class="t" style="left:960.500px;top:516.500px">WO</span>
<span class="t" style="left:201.500px;top:539px">1</span><span class="t" style="left:228.500px;top:539px">01 hell uom</span><span class="t" style="left:464px;top:539px">1</span><span class="t" style="left:517px;top:539px">sqft</span><span class="t" style="left:611.500px;top:539px">$144.00</span><span class="t c" style="left:658px;top:539px;color:#fff">LA</span><span class="t" style="left:678.500px;top:539px">$144.00</span><span class="t" style="left:745.500px;top:539px">Tax</span><span class="t" style="left:781.500px;top:539px">0</span><span class="t bl" style="left:823.500px;top:539px;font-size:10.500px">Edit</span><span class="t" style="left:880.500px;top:539px;color:#2b8ce6">Ready to Ship</span>
<span class="t" style="left:1000px;top:443px">THIS ORDER</span><span class="t" style="left:1064px;top:443px">CUSTOMER</span><span class="t" style="left:1137.500px;top:443px">LOGS</span>
<span class="t" style="left:1002px;top:475px">SUMMARY</span>
<span class="t" style="left:1006.500px;top:495px">Total:</span><span class="t r" style="left:1169px;top:495px">$151.20</span><span class="t" style="left:1006.500px;top:508px">Due:</span><span class="t r" style="left:1169px;top:508px">$0.00</span>
<span class="t" style="left:1006.500px;top:522px">Created on 07/19/2021 03:07 PM by test</span><span class="t" style="left:1006.500px;top:533px">Last edited on 07/19/2021 03:12 PM by test</span>
<span class="t" style="left:1020px;top:565px;color:#666">0 Open Tasks</span><span class="t g" style="left:1020px;top:581px">0 Completed Tasks</span>
<span class="t" style="left:1002px;top:613px">RELATED DOCUMENTS</span>
<span class="t b" style="left:1006px;top:635.500px">Karinatest</span><span class="t" style="left:1016px;top:649px">07/19/2021</span><span class="t" style="left:1059px;top:649px">P-0004682</span><span class="t r" style="left:1158px;top:649px">$160.00</span>
<span class="t bl c" style="left:1022px;top:868px">CARD</span><span class="t bl c" style="left:1065px;top:868px">CHECK</span><span class="t bl c" style="left:1105.500px;top:868px">✓CASH</span><span class="t bl c" style="left:1147px;top:868px">CRDT</span>
<span class="t b" style="left:997px;top:897px">Open Balance</span><span class="t" style="left:997px;top:908px">SubTotal:</span><span class="t r" style="left:1173px;top:908px">$144.00</span><span class="t" style="left:997px;top:918px">Discount:</span><span class="t r" style="left:1173px;top:918px">$0</span><span class="t" style="left:997px;top:929px">Tax:</span><span class="t r" style="left:1173px;top:929px">$7.20</span><span class="t b" style="left:997px;top:939px">Total:</span><span class="t b r" style="left:1173px;top:939px">$151.20</span><span class="t bl" style="left:997px;top:950px">Currency:</span>
<span class="t" style="left:200px;top:979px">Layaway</span><span class="t" style="left:266px;top:979px">Is Dropship</span><span class="t" style="left:200px;top:995px">Require customer acknowledgment</span><span class="t" style="left:368px;top:995px">Show Order Total on PDF/WEB</span><span class="t" style="left:511.500px;top:995px">Show item amount on PDF\WEB</span>
<span class="t" style="left:821px;top:988px;color:#888">TAX</span><span class="t" style="left:839px;top:988px">Test Tax</span><span class="t" style="left:897px;top:988px">(5 %)</span><span class="t" style="left:932px;top:988px">Discount:</span><span class="t bl" style="left:968px;top:988px">0%</span>
<span class="t c" style="left:229px;top:1027px;color:#dde">VOID ORDER</span><span class="t bl c" style="left:760.500px;top:1027px">CANCEL</span><span class="t c" style="left:838px;top:1027px;color:#fff">SAVE</span><span class="t c" style="left:946px;top:1027px;color:#eee">CREATE INVOICE</span>
<span class="t b" style="left:1002.500px;top:978px;color:#222">Payments</span><span class="t b r" style="left:1167.500px;top:978px;color:#222">$151.2</span><span class="t" style="left:1002.500px;top:988px">Cash 1:</span><span class="t r" style="left:1167.500px;top:988px">$160.00</span><span class="t b" style="left:1002.500px;top:998px;color:#222">Credits:</span><span class="t" style="left:1002.500px;top:1009px">Put on account:</span><span class="t r" style="left:1167.500px;top:1009px">$-8.80</span><span class="t b" style="left:1002.500px;top:1019px;color:#222">Total Applied:</span><span class="t b r" style="left:1167.500px;top:1019px;color:#222">$151.20</span><span class="t b" style="left:1002.500px;top:1030px;color:#222">Amount Due:</span><span class="t b r" style="left:1167.500px;top:1030px;color:#222">$0.00</span>
</div>
<!-- red highlights -->
<div class="box" style="left:991px;top:959px;width:188px;height:81px;border:3px solid #ff5349;box-shadow:inset 1px 1px 2px #555"></div>
<div class="box" style="left:1227px;top:331px;width:288px;height:175px;border:3px solid #ff5349;box-shadow:2px 2px 2px #333,inset 1px 1px 2px #555"></div>
<!-- modal -->
<div class="box" style="left:1240.500px;top:363px;width:253.500px;height:115px;background:#fff;border-radius:0 0 2px 2px"></div>
<div class="box" style="left:1240.500px;top:363px;width:253.500px;height:26px;background:#333"></div>
<span class="t" style="left:1248px;top:376.500px;color:#eee;font-size:12.500px;letter-spacing:-.2px">Overpayment</span>
<svg class="p" width="1920" height="1040" viewBox="0 0 1920 1040" xmlns="http://www.w3.org/2000/svg"><path fill="none" stroke="#ddd" d="M1478.500 372.500l7 7M1485.500 372.500l-7 7"/></svg>
<span class="t" style="left:1251.500px;top:418px;color:#333">Change Due: <b>$8.80</b></span>
<span class="box t" style="left:1253px;top:447.500px;width:97px;height:19.500px;background:#00619a;color:#fff;line-height:19.500px;text-align:center">APPLY TO ACCOUNT</span>
<span class="box t" style="left:1353.500px;top:447.500px;width:72.500px;height:19.500px;background:#00619a;color:#fff;line-height:19.500px;text-align:center">GIVE CHANGE</span>
<span class="box t" style="left:1429.500px;top:447.500px;width:52px;height:19.500px;background:#00619a;color:#fff;line-height:19.500px;text-align:center">REFUND</span>
</div></body></html>
